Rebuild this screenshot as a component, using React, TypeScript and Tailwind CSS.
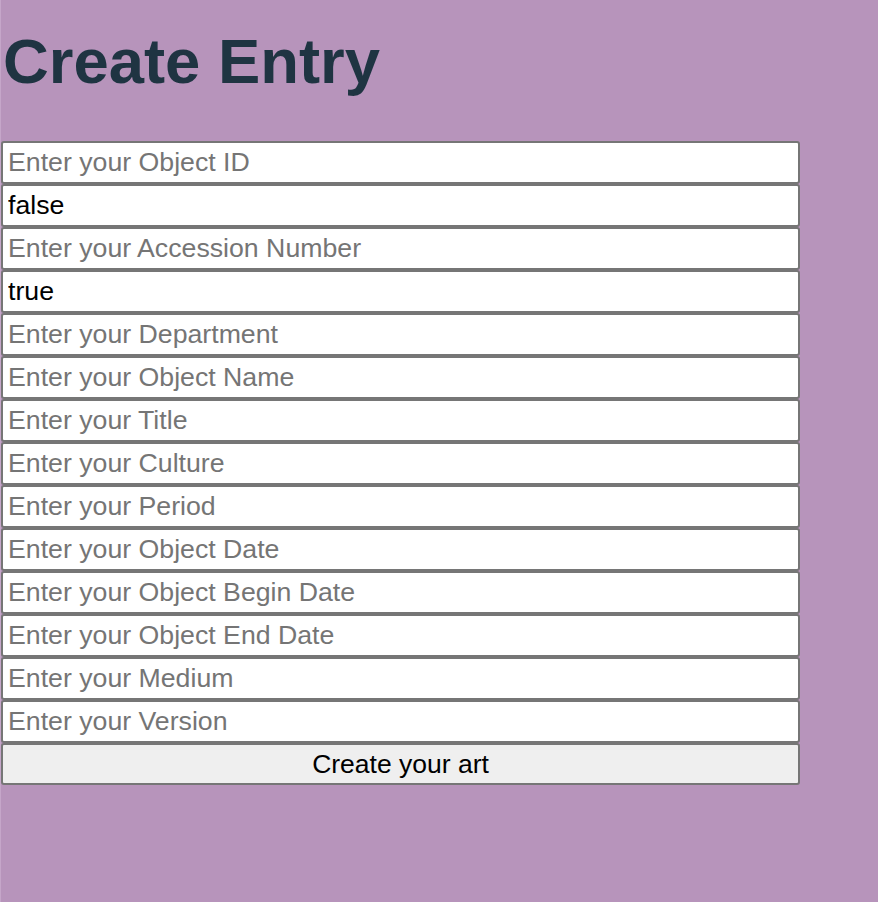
import React, { useState } from 'react';

// Placeholder per field; "false"/"true" rows are prefilled values
const fields: { name: string; placeholder: string; value?: string }[] = [
  { name: 'objectID', placeholder: 'Enter your Object ID' },
  { name: 'isHighlight', placeholder: 'Enter your Highlight', value: 'false' },
  { name: 'accessionNumber', placeholder: 'Enter your Accession Number' },
  { name: 'isPublicDomain', placeholder: 'Enter your Public Domain', value: 'true' },
  { name: 'department', placeholder: 'Enter your Department' },
  { name: 'objectName', placeholder: 'Enter your Object Name' },
  { name: 'title', placeholder: 'Enter your Title' },
  { name: 'culture', placeholder: 'Enter your Culture' },
  { name: 'period', placeholder: 'Enter your Period' },
  { name: 'objectDate', placeholder: 'Enter your Object Date' },
  { name: 'objectBeginDate', placeholder: 'Enter your Object Begin Date' },
  { name: 'objectEndDate', placeholder: 'Enter your Object End Date' },
  { name: 'medium', placeholder: 'Enter your Medium' },
  { name: 'version', placeholder: 'Enter your Version' },
];

export default function App() {
  const [form, setForm] = useState<Record<string, string>>(() =>
    Object.fromEntries(fields.map((f) => [f.name, f.value ?? '']))
  );

  const handleChange = (e: React.ChangeEvent<HTMLInputElement>) => {
    setForm({ ...form, [e.target.name]: e.target.value });
  };

  const handleSubmit = (e: React.FormEvent) => {
    e.preventDefault();
    console.log(form);
  };

  return (
    <div className="min-h-screen bg-[#b794bb] border-l border-[#c5a6c9] font-['Liberation_Sans',Arial,sans-serif]">
      <h1 className="pt-[24px] pl-[2px] text-[63.4px] leading-[74px] font-bold text-[#1f3442]">Create Entry</h1>

      <form onSubmit={handleSubmit} className="mt-[43px] flex flex-col w-[799px]">
        {fields.map((f) => (
          <input
            key={f.name}
            type="text"
            name={f.name}
            value={form[f.name]}
            onChange={handleChange}
            placeholder={f.placeholder}
            className="h-[43px] w-full bg-white border-2 border-[#767676] rounded-[3px] px-[5px] text-[26.7px] text-black placeholder:text-[#757575] outline-none"
          />
        ))}
        <button
          type="submit"
          className="h-[42px] w-full bg-[#efefef] border-2 border-[#767676] rounded-[3px] text-[26.5px] text-black"
        >
          Create your art
        </button>
      </form>
    </div>
  );
}
